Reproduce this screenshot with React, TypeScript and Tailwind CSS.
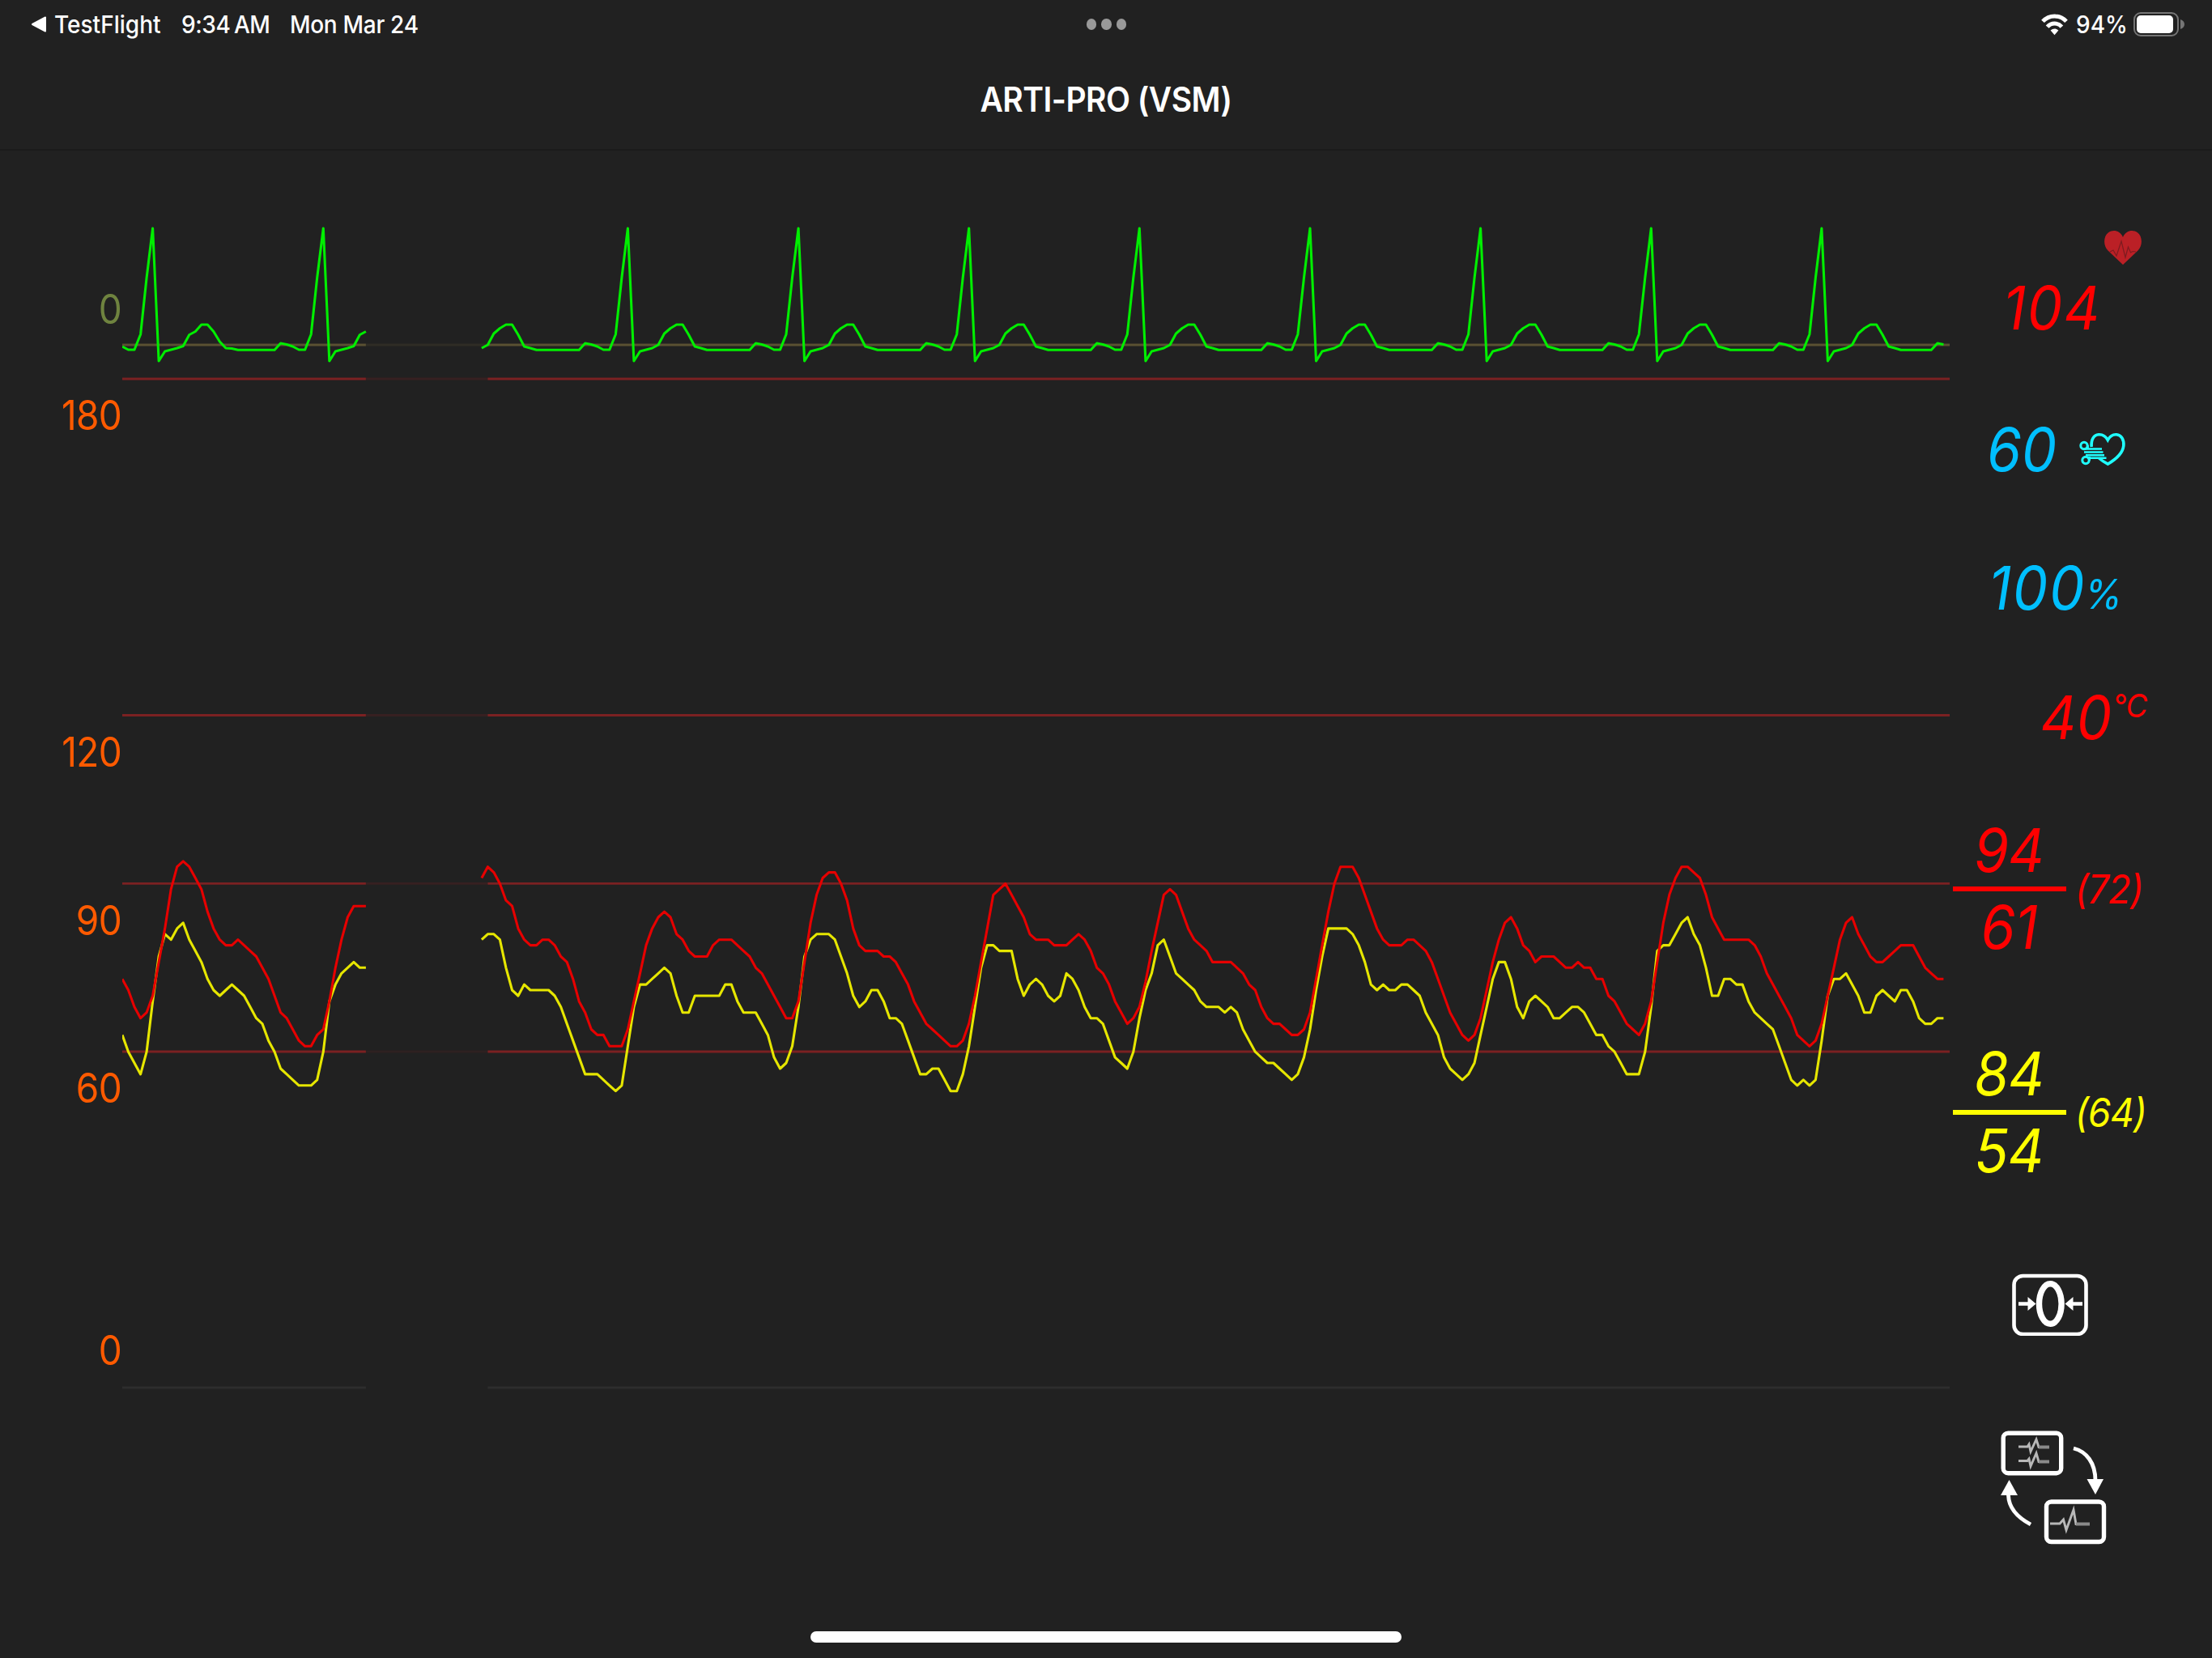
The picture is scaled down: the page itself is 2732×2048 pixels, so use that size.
import type { ReactNode } from 'react';

const STEP = 7.523;
const GAP_START = 40;
const GAP_END = 59;

// one heart beat, 28 samples, starting three samples before the R spike
const BEAT = [
  432, 413, 343, 282, 446, 434, 432, 430, 427.5, 413.5, 409.5, 401, 401, 409.5, 422, 430, 430.5, 432.3, 432.3, 432.3,
  432.3, 432.3, 432.3, 432.3, 424, 425.5, 428, 432,
];
const BEAT_SMOOTH = [
  432, 413, 343, 282, 446, 434, 432, 430, 426, 412, 405.5, 401, 401, 413.5, 428, 430, 432.3, 432.3, 432.3, 432.3,
  432.3, 432.3, 432.3, 432.3, 424, 425.5, 428, 432,
];

const ART_A = [
  73, 71, 68, 66, 67, 70, 76, 82, 89, 93, 94, 93, 91, 89, 85, 82, 80, 79, 79, 80, 79, 78, 77, 75, 73, 70, 67, 66, 64,
  62, 61, 61, 63, 64, 69, 75, 80, 84, 86, 86, 86,
];
const ART_B = [
  91, 93, 92, 90, 87, 86, 82, 80, 79, 79, 80, 80, 79, 77, 76, 73, 69, 67, 64, 63, 63, 61, 61, 61, 64, 69, 74, 79, 82,
  84, 85, 84, 81, 80, 78, 77, 77, 77, 79, 80, 80, 80, 79, 78, 77, 75, 74, 72, 70, 68, 66, 66, 69, 76, 83, 88, 91, 92,
  92, 90, 87, 82, 79, 78, 78, 78, 77, 77, 76, 74, 72, 69, 67, 65, 64, 63, 62, 61, 61, 62, 65, 70, 76, 82, 88, 89, 90,
  88, 86, 84, 81, 80, 80, 80, 79, 79, 79, 80, 81, 80, 78, 75, 74, 72, 69, 67, 65, 66, 68, 72.5, 78, 83, 88, 89, 88, 85,
  82, 80, 79, 78, 76, 76, 76, 76, 75, 74, 72, 71, 68, 66, 65, 65, 64, 63, 63, 64, 67, 73, 79, 85, 90, 93, 93, 93, 91,
  88, 85, 82, 80, 79, 79, 79, 80, 80, 79, 78, 76, 73, 70, 67, 65, 63, 62, 63, 66, 71, 76, 80, 83, 84, 82, 79, 78, 76,
  77, 77, 77, 76, 75, 75, 76, 75, 75, 73, 73, 70, 69, 67, 65, 64, 63, 65, 69, 76, 83, 88, 91, 93, 93, 92, 91, 88, 84,
  82, 80, 80, 80, 80, 80, 79, 77, 74, 72, 70, 68, 66, 63, 62, 61, 62, 65, 70, 75, 80, 83, 84, 81, 79, 77, 76, 76, 77,
  78, 79, 79, 79, 77, 75, 74, 73, 73,
];
const PAP_A = [
  63, 60, 58, 56, 60, 69, 77, 81, 80, 82, 83, 80, 78, 76, 73, 71, 70, 71, 72, 71, 70, 68, 66, 65, 62, 60, 57, 56, 55,
  54, 54, 54, 55, 60, 69, 72, 74, 75, 76, 75, 75,
];
const PAP_B = [
  80, 81, 81, 80, 75, 71, 70, 72, 71, 71, 71, 71, 70, 68, 65, 62, 59, 56, 56, 56, 55, 54, 53, 54, 61, 68, 72, 72, 73,
  74, 75, 74, 70, 67, 67, 70, 70, 70, 70, 70, 72, 72, 69, 67, 67, 67, 65, 63, 59, 57, 58, 61, 68, 77, 80, 81, 81, 81,
  80, 77, 74, 70, 68, 69, 71, 71, 69, 66, 66, 65, 62, 59, 56, 56, 57, 57, 55, 53, 53, 56, 61, 68, 75, 79, 79, 78, 78,
  78, 73, 70, 72, 73, 72, 70, 69, 70, 74, 73, 71, 68, 66, 66, 65, 62, 59, 58, 57, 60, 66, 71, 74, 79, 80, 77, 74, 73,
  72, 71, 69, 68, 68, 68, 67, 68, 67, 64, 62, 60, 59, 58, 58, 57, 56, 55, 56, 59, 64, 71, 77, 82, 82, 82, 82, 81, 79,
  76, 72, 71, 72, 71, 71, 72, 72, 71, 70, 67, 65, 63, 59, 57, 56, 55, 56, 58, 63, 68, 73, 76, 76, 73, 68, 66, 69, 70,
  69, 68, 66, 66, 67, 68, 68, 67, 65, 63, 63, 61, 60, 58, 56, 56, 56, 60, 68, 78, 79, 79, 81, 83, 84, 81, 79, 75, 70,
  70, 73, 73, 72, 72, 69, 67, 66, 65, 64, 61, 58, 55, 54, 55, 54, 55, 62, 70, 73, 73, 74, 72, 70, 67, 67, 70, 71, 70,
  69, 71, 71, 69, 66, 65, 65, 66, 66,
];

const pressureY = (v: number) => 1299.2 - 186 - (v - 60) * 6.925;

const toPoints = (ys: number[], start: number) =>
  ys.map((y, i) => `${((start + i) * STEP).toFixed(1)},${y.toFixed(1)}`).join(' ');

// spike = index of an R spike, used to align the repeating beat
const ecg = (beat: number[], from: number, to: number, spike: number) => {
  const ys: number[] = [];
  for (let i = from; i <= to; i++) {
    ys.push(beat[(((i - spike + 3) % 28) + 28) % 28] - 186);
  }
  return toPoints(ys, from);
};

const GridLine = ({ y, color, faded }: { y: number; color: string; faded: number }) => (
  <g stroke={color} strokeWidth="2.8">
    <path d={`M0 ${y}H${GAP_START * STEP}M${(GAP_END + 1) * STEP} ${y}H2257`} />
    <path d={`M${GAP_START * STEP} ${y}H${(GAP_END + 1) * STEP}`} opacity={faded} />
  </g>
);

const Waveforms = () => (
  <svg className="block w-[2257px] h-[1600px]" viewBox="0 0 2257 1600" fill="none">
    <GridLine y={240} color="#5a5132" faded={0.25} />
    <GridLine y={282} color="#7b2122" faded={0.25} />
    <GridLine y={697.5} color="#7b2122" faded={0.25} />
    <GridLine y={905.3} color="#7b2122" faded={0.25} />
    <GridLine y={1113} color="#7b2122" faded={0.15} />
    <GridLine y={1528} color="#2d2d2d" faded={0} />
    <g strokeWidth="3.1" strokeLinejoin="round">
      <g stroke="#e6e600">
        <polyline points={toPoints(PAP_A.map(pressureY), 0)} />
        <polyline points={toPoints(PAP_B.map(pressureY), GAP_END)} />
      </g>
      <g stroke="#e60000">
        <polyline points={toPoints(ART_A.map(pressureY), 0)} />
        <polyline points={toPoints(ART_B.map(pressureY), GAP_END)} />
      </g>
      <g stroke="#00ee00">
        <polyline points={ecg(BEAT, 0, GAP_START, 5)} />
        <polyline points={`${ecg(BEAT_SMOOTH, GAP_END, 297, 83)} ${toPoints([238, 239.5], 298)}`} />
      </g>
    </g>
  </svg>
);

const StatusBar = () => (
  <div className="h-[60px] flex items-center text-[28px] leading-none font-medium text-white">
    <div className="flex-1 flex items-center pl-[38px]">
      <svg className="w-[20px] h-[20px]" viewBox="0 0 20 20">
        <path d="M2 10L18 1.5V18.5Z" fill="#fff" stroke="#fff" strokeWidth="2" strokeLinejoin="round" />
      </svg>
      <span className="ml-[9px] w-[157px] scale-y-[1.07] whitespace-nowrap">TestFlight</span>
      <span className="w-[134px] scale-y-[1.07] whitespace-nowrap tracking-[-0.4px]">9:34&#8201;AM</span>
      <span className="scale-y-[1.07] whitespace-nowrap tracking-[-0.3px]">Mon Mar 24</span>
    </div>
    <div className="flex gap-[6px] -ml-[3px]">
      <i className="w-[12.4px] h-[13.4px] rounded-[50%] bg-[#999]" />
      <i className="w-[12.4px] h-[13.4px] rounded-[50%] bg-[#999]" />
      <i className="w-[12.4px] h-[13.4px] rounded-[50%] bg-[#999]" />
    </div>
    <div className="flex-1 flex items-center justify-end pr-[34px]">
      <svg className="w-[33px] h-[27px]" viewBox="0 0 33 27" fill="none" stroke="#fff" strokeWidth="5">
        <path d="M2 9.4C10 .8 23 .8 31 9.4" />
        <path d="M7.6 16.2C12.6 10.6 20.4 10.6 25.4 16.2" />
        <path d="M11.6 20.6C14.4 17.8 18.6 17.8 21.4 20.6L16.5 26.2Z" fill="#fff" stroke="none" />
      </svg>
      <span className="ml-[10px] w-[71px] scale-y-[1.07] whitespace-nowrap">94%</span>
      <div className="w-[56px] h-[30px] rounded-[9px] border-[2.5px] border-[#757575] p-[2px]">
        <div className="w-[45px] h-full rounded-[5px] bg-white" />
      </div>
      <svg className="ml-[2px] w-[5px] h-[12px]" viewBox="0 0 5 12">
        <path d="M0 0C3 1 5 3 5 6S3 11 0 12Z" fill="#757575" />
      </svg>
    </div>
  </div>
);

const AxisLabel = ({ className, children }: { className: string; children: ReactNode }) => (
  <div className={`h-[60px] leading-[60px] text-right text-[46px] tracking-[-0.7px] scale-y-[1.09] ${className}`}>
    {children}
  </div>
);

const Num = ({ className = '', children }: { className?: string; children: ReactNode }) => (
  <span className={`block text-[69px] h-[70px] leading-[70px] italic scale-y-[1.08] whitespace-nowrap ${className}`}>
    {children}
  </span>
);

type PressureProps = { sys: number; dia: number; mean: number; className: string };

const Pressure = ({ sys, dia, mean, className }: PressureProps) => (
  <div className={`flex items-center pl-1 ${className}`}>
    <div className="w-[140px] flex flex-col items-center">
      <Num className="pr-[1px] tracking-[-0.5px]">{sys}</Num>
      <div className="mt-[10px] mb-[9px] w-full h-[6px] bg-current" />
      <Num className="pr-[1px] tracking-[-0.5px]">{dia}</Num>
    </div>
    <span className="ml-[11px] text-[46px] leading-none italic scale-y-[1.08] tracking-[-1px]">({mean})</span>
  </div>
);

const HeartIcon = () => (
  <svg className="w-[46px] h-[42px]" viewBox="0 0 46 42">
    <path
      d="M23 42L4.5 24.5C-2 17.5-.8 6.5 5 2.3C11-2 19.5 0 23 8C26.5 0 35-2 41 2.3C46.8 6.5 48 17.5 41.5 24.5Z"
      fill="#bb2026"
    />
    <path
      d="M7 26L11 24L15 31L21 13L26 33L29.5 20L32.5 27L35 25.5L39 26"
      fill="none"
      stroke="#7d1b20"
      strokeWidth="1.2"
    />
  </svg>
);

const PulseHeartIcon = () => (
  <svg className="w-[58px] h-[42px]" viewBox="0 0 58 42" fill="none" stroke="#1fffff" strokeWidth="3.6">
    <path d="M15.2 18C14.5 9 18 3.2 24 2.8C29 2.5 33 5.5 35.3 9.5C37.5 5.5 41 2.5 46 2.8C52 3.2 55.5 9 54.8 16.500C54 25 45 33.5 35.3 39.2C31 37 28 35 24.5 32" />
    <path d="M7 20.5H28M6 24.6H29.5M8 28.2H31M10 31.8H33.5" strokeWidth="2.5" />
    <circle cx="6" cy="16.5" r="4.2" strokeWidth="3" />
    <circle cx="8" cy="34.5" r="4.2" strokeWidth="3" />
    <path d="M10.5 16V21M12.5 30V35" strokeWidth="2.8" />
  </svg>
);

const ZeroIcon = () => (
  <svg className="w-[94px] h-[77px]" viewBox="0 0 94 77" fill="none" stroke="#fff">
    <rect x="2.5" y="3" width="89" height="72" rx="11" strokeWidth="4.6" />
    <ellipse cx="47.3" cy="37.5" rx="13.8" ry="24.8" strokeWidth="7.4" />
    <path d="M8 37.5H22M87 37.5H73" strokeWidth="4.4" />
    <path d="M19.5 29L29.5 37.5L19.5 46ZM75.5 29L65.5 37.5L75.5 46Z" fill="#fff" stroke="none" />
  </svg>
);

const SwitchViewIcon = () => (
  <svg className="w-[131px] h-[141px]" viewBox="0 0 131 141" fill="none" stroke="#fff">
    <rect x="3.2" y="3.2" width="71.5" height="49.5" rx="6" strokeWidth="5.4" />
    <rect x="56.5" y="88" width="71" height="49.5" rx="6" strokeWidth="5.4" />
    <g stroke="#b8b8b8" strokeWidth="2.9">
      <path d="M22 20H33L35 17L37 26L44 11L47 20.5H60" />
      <path d="M22 37.5H33L35 35L37 44L44 28L47 38.5H60" />
      <path d="M61 115H73L77.5 110L81 123L90 98L93 115.5H110" />
      <path d="M47 20.5H60M47 38.5H60M93 115.5H110" stroke="#8a8a8a" strokeWidth="4" />
    </g>
    <path d="M90 22C106 26 117 40 117 62" strokeWidth="4.8" />
    <path d="M106.5 60H127L117 79Z" fill="#fff" stroke="none" />
    <path d="M37 116C22 108 10 97 9.5 80" strokeWidth="4.8" />
    <path d="M0 80H21L10.5 61Z" fill="#fff" stroke="none" />
  </svg>
);

const App = () => {
  return (
    <div className="w-[2732px] h-[2048px] flex flex-col overflow-hidden bg-[#212121] font-['Inter','Liberation_Sans',sans-serif]">
      <StatusBar />
      <header className="h-[126px] flex items-center justify-center border-b-2 border-[#1b1b1b]">
        <h1 className="text-[39px] leading-none font-semibold text-white scale-y-[1.07] tracking-[-0.5px]">
          ARTI-PRO (VSM)
        </h1>
      </header>

      <main className="flex h-[1829px]">
        <div className="w-[151px] pr-[1px]">
          <AxisLabel className="mt-[165px] text-[#6f833f]">0</AxisLabel>
          <AxisLabel className="mt-[71px] text-[#ff5a00]">180</AxisLabel>
          <AxisLabel className="mt-[356px] text-[#ff5a00]">120</AxisLabel>
          <AxisLabel className="mt-[148px] text-[#ff5a00]">90</AxisLabel>
          <AxisLabel className="mt-[147px] text-[#ff5a00]">60</AxisLabel>
          <AxisLabel className="mt-[264px] text-[#ff5a00]">0</AxisLabel>
        </div>

        <Waveforms />

        <aside className="w-[324px] flex flex-col items-start">
          <div className="mt-[99px] ml-[191px]">
            <HeartIcon />
          </div>
          <Num className="mt-[18px] ml-[66px] tracking-[1.7px] text-[#ff0000]">104</Num>
          <div className="mt-[105px] ml-[46px] flex items-center text-[#00bfff]">
            <Num className="w-[114px]">60</Num>
            <PulseHeartIcon />
          </div>
          <div className="mt-[101px] ml-[48px] h-[70px] flex text-[#00bfff]">
            <Num className="tracking-[1.7px]">100</Num>
            <span className="mt-[8px] -ml-[2px] text-[48px] leading-[70px] italic scale-y-[1.05]">%</span>
          </div>
          <div className="mt-[90px] ml-[112px] h-[70px] flex text-[#ff0000]">
            <Num>40</Num>
            <span className="mt-[2px] ml-[1px] text-[37px] leading-[40px] italic scale-y-[1.08]">°C</span>
          </div>
          <Pressure sys={94} dia={61} mean={72} className="mt-[94px] text-[#ff0000]" />
          <Pressure sys={84} dia={54} mean={64} className="mt-[111px] text-[#ffff00]" />
          <div className="mt-[117px] ml-[77px]">
            <ZeroIcon />
          </div>
          <div className="mt-[117px] ml-[63px]">
            <SwitchViewIcon />
          </div>
        </aside>
      </main>

      <div className="self-center w-[730px] h-[14px] rounded-full bg-white" />
    </div>
  );
};

export default App;
